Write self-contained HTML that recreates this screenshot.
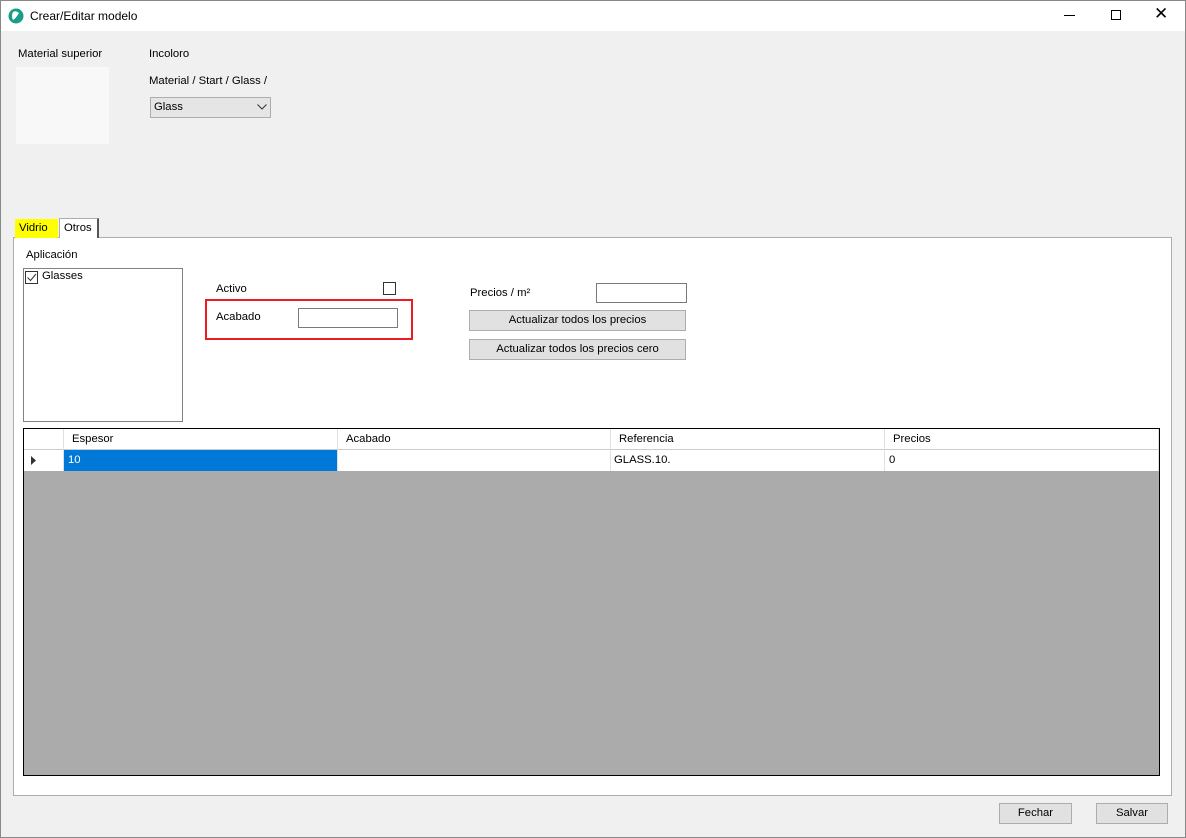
<!DOCTYPE html><html><head><style>
*{margin:0;padding:0;box-sizing:border-box}
body{width:1186px;height:838px;background:#f0f0f0;font-family:"Liberation Sans",sans-serif;font-size:11.3px;color:#000;position:relative;overflow:hidden}
.a{position:absolute}
.btn{position:absolute;background:#e1e1e1;border:1px solid #adadad;text-align:center;line-height:19px}
.tb{position:absolute;background:#fff;border:1px solid #7a7a7a}
.c{position:absolute;top:0;height:21px;line-height:21px;padding-left:5px;border-right:1px solid #e0e0e0}
</style></head><body>
<div class="a" style="left:0;top:0;width:1186px;height:31px;background:#fff"></div>
<div class="a" style="left:0;top:0;width:1186px;height:838px;border:1px solid #888;z-index:5;pointer-events:none"></div>
<svg class="a" style="left:8px;top:8px" width="16" height="16"><circle cx="8" cy="8" r="7.5" fill="#1a9c8a"/><path d="M5 4 Q8 2 11 5 L9 8 Q7 11 5 12 Q3 8 5 4Z" fill="#fff"/></svg>
<div class="a" style="left:30px;top:9px;font-size:12px">Crear/Editar modelo</div>
<div class="a" style="left:1064px;top:15px;width:11px;height:1px;background:#000"></div>
<div class="a" style="left:1111px;top:10px;width:10px;height:10px;border:1px solid #000"></div>
<div class="a" style="left:1154px;top:4px;font-size:17px">✕</div>
<div class="a" style="left:18px;top:48px">Material superior</div>
<div class="a" style="left:16px;top:67px;width:93px;height:77px;background:#f8f8f8"></div>
<div class="a" style="left:149px;top:48px">Incoloro</div>
<div class="a" style="left:149px;top:75px">Material / Start / Glass /</div>
<div class="a" style="left:150px;top:97px;width:121px;height:21px;background:#e5e5e5;border:1px solid #adadad;padding:3px 0 0 3px">Glass<svg class="a" style="left:106px;top:6px" width="10" height="6"><path d="M0.5 0.5L5 5L9.5 0.5" stroke="#333" fill="none"/></svg></div>
<div class="a" style="left:13px;top:237px;width:1159px;height:559px;background:#fff;border:1px solid #adadad"></div>
<div class="a" style="left:15px;top:219px;width:43px;height:19px;background:#ffff00;padding:3px 0 0 4px">Vidrio</div>
<div class="a" style="left:59px;top:218px;width:40px;height:20px;background:#fff;border:1px solid #adadad;border-bottom:none;border-right:2px solid #555;padding:3px 0 0 4px">Otros</div>
<div class="a" style="left:26px;top:249px">Aplicación</div>
<div class="a" style="left:23px;top:268px;width:160px;height:154px;background:#fff;border:1px solid #828282"></div>
<div class="a" style="left:25px;top:271px;width:13px;height:13px;border:1px solid #333"><svg width="11" height="11"><path d="M1.5 5.5L4.5 8.5L10 2" stroke="#333" fill="none"/></svg></div>
<div class="a" style="left:42px;top:270px">Glasses</div>
<div class="a" style="left:216px;top:283px">Activo</div>
<div class="a" style="left:383px;top:282px;width:13px;height:13px;border:1px solid #333"></div>
<div class="a" style="left:205px;top:299px;width:208px;height:41px;border:2px solid #ed1c24"></div>
<div class="a" style="left:216px;top:311px">Acabado</div>
<div class="tb" style="left:298px;top:308px;width:100px;height:20px"></div>
<div class="a" style="left:470px;top:287px">Precios / m²</div>
<div class="tb" style="left:596px;top:283px;width:91px;height:20px"></div>
<div class="btn" style="left:469px;top:310px;width:217px;height:21px">Actualizar todos los precios</div>
<div class="btn" style="left:469px;top:339px;width:217px;height:21px">Actualizar todos los precios cero</div>
<div class="a" style="left:23px;top:428px;width:1137px;height:348px;background:#ababab;border:1px solid #000"></div>
<div class="a" style="left:24px;top:429px;width:1135px;height:21px;background:#fff;border-bottom:1px solid #ccc">
<div class="c" style="left:0;width:40px"></div><div class="c" style="left:40px;width:274px;padding-left:8px">Espesor</div><div class="c" style="left:314px;width:273px;padding-left:8px">Acabado</div><div class="c" style="left:587px;width:274px;padding-left:8px">Referencia</div><div class="c" style="left:861px;width:274px;padding-left:8px">Precios</div></div>
<div class="a" style="left:24px;top:450px;width:1135px;height:21px;background:#fff">
<div class="c" style="left:0;width:40px;padding:0"><svg style="margin:6px 0 0 7px" width="5" height="9"><path d="M0 0L5 4.5L0 9Z" fill="#333"/></svg></div>
<div class="c" style="left:40px;width:274px;background:#0078d7;color:#fff;padding-left:4px">10</div><div class="c" style="left:314px;width:273px"></div><div class="c" style="left:587px;width:274px;padding-left:3px">GLASS.10.</div><div class="c" style="left:861px;width:274px;padding-left:4px">0</div></div>
<div class="btn" style="left:999px;top:803px;width:73px;height:21px">Fechar</div>
<div class="btn" style="left:1096px;top:803px;width:72px;height:21px">Salvar</div>
</body></html>
